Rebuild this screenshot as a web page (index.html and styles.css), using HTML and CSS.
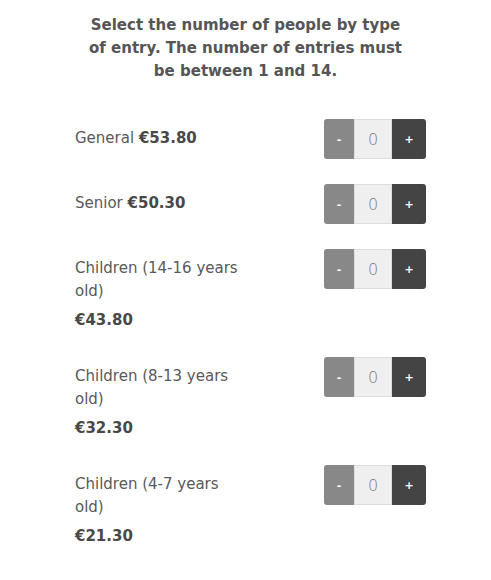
FILE: index.html
```html
<!DOCTYPE html>
<html lang="en">
<head>
<meta charset="utf-8">
<title>Entries</title>
<link rel="stylesheet" href="styles.css">
</head>
<body>
<div class="page">
  <h2 class="intro">Select the number of people by type of entry. The number of entries must be between 1 and 14.</h2>
  <div class="list">
    <div class="row">
      <div class="label">General <b>€53.80</b></div>
      <div class="stepper"><button class="minus">-</button><span class="value">0</span><button class="plus">+</button></div>
    </div>
    <div class="row">
      <div class="label">Senior <b>€50.30</b></div>
      <div class="stepper"><button class="minus">-</button><span class="value">0</span><button class="plus">+</button></div>
    </div>
    <div class="row">
      <div class="label">Children (14-16 years old)<div class="price">€43.80</div></div>
      <div class="stepper"><button class="minus">-</button><span class="value">0</span><button class="plus">+</button></div>
    </div>
    <div class="row">
      <div class="label">Children (8-13 years old)<div class="price">€32.30</div></div>
      <div class="stepper"><button class="minus">-</button><span class="value">0</span><button class="plus">+</button></div>
    </div>
    <div class="row">
      <div class="label">Children (4-7 years old)<div class="price">€21.30</div></div>
      <div class="stepper"><button class="minus">-</button><span class="value">0</span><button class="plus">+</button></div>
    </div>
  </div>
</div>
</body>
</html>
```
FILE: styles.css
```css
html, body {
  margin: 0;
  padding: 0;
  background: #fff;
}
body {
  font-family: "DejaVu Sans", "Open Sans", sans-serif;
  color: #555;
}
.page {
  width: 491px;
  padding-top: 14px;
}
.intro {
  margin: 0 auto;
  width: 330px;
  text-align: center;
  font-size: 15px;
  line-height: 23px;
  font-weight: bold;
  color: #555;
}
.list {
  margin-top: 36px;
  padding-left: 75px;
  width: 351px;
  display: flex;
  flex-direction: column;
  gap: 25px;
}
.row {
  display: flex;
  justify-content: space-between;
  align-items: flex-start;
}
.label {
  width: 170px;
  padding-top: 8px;
  font-size: 15px;
  line-height: 23px;
  color: #595959;
}
.label b, .price {
  font-weight: bold;
  color: #484848;
}
.price {
  margin-top: 6px;
}
.stepper {
  display: flex;
  height: 40px;
  border-radius: 3px;
  overflow: hidden;
}
.stepper button {
  border: 0;
  margin: 0;
  padding: 0;
  height: 40px;
  color: #fff;
  font-family: "DejaVu Sans", sans-serif;
  font-size: 11px;
  font-weight: bold;
}
.minus {
  width: 30px;
  background: #888;
}
.plus {
  width: 34px;
  background: #444;
}
.value {
  width: 36px;
  height: 38px;
  border: 1px solid #ddd;
  background: #efefef;
  display: flex;
  align-items: center;
  justify-content: center;
  font-family: "Open Sans", "DejaVu Sans", sans-serif;
  font-size: 16px;
  font-weight: 300;
  color: #777;
}
```
